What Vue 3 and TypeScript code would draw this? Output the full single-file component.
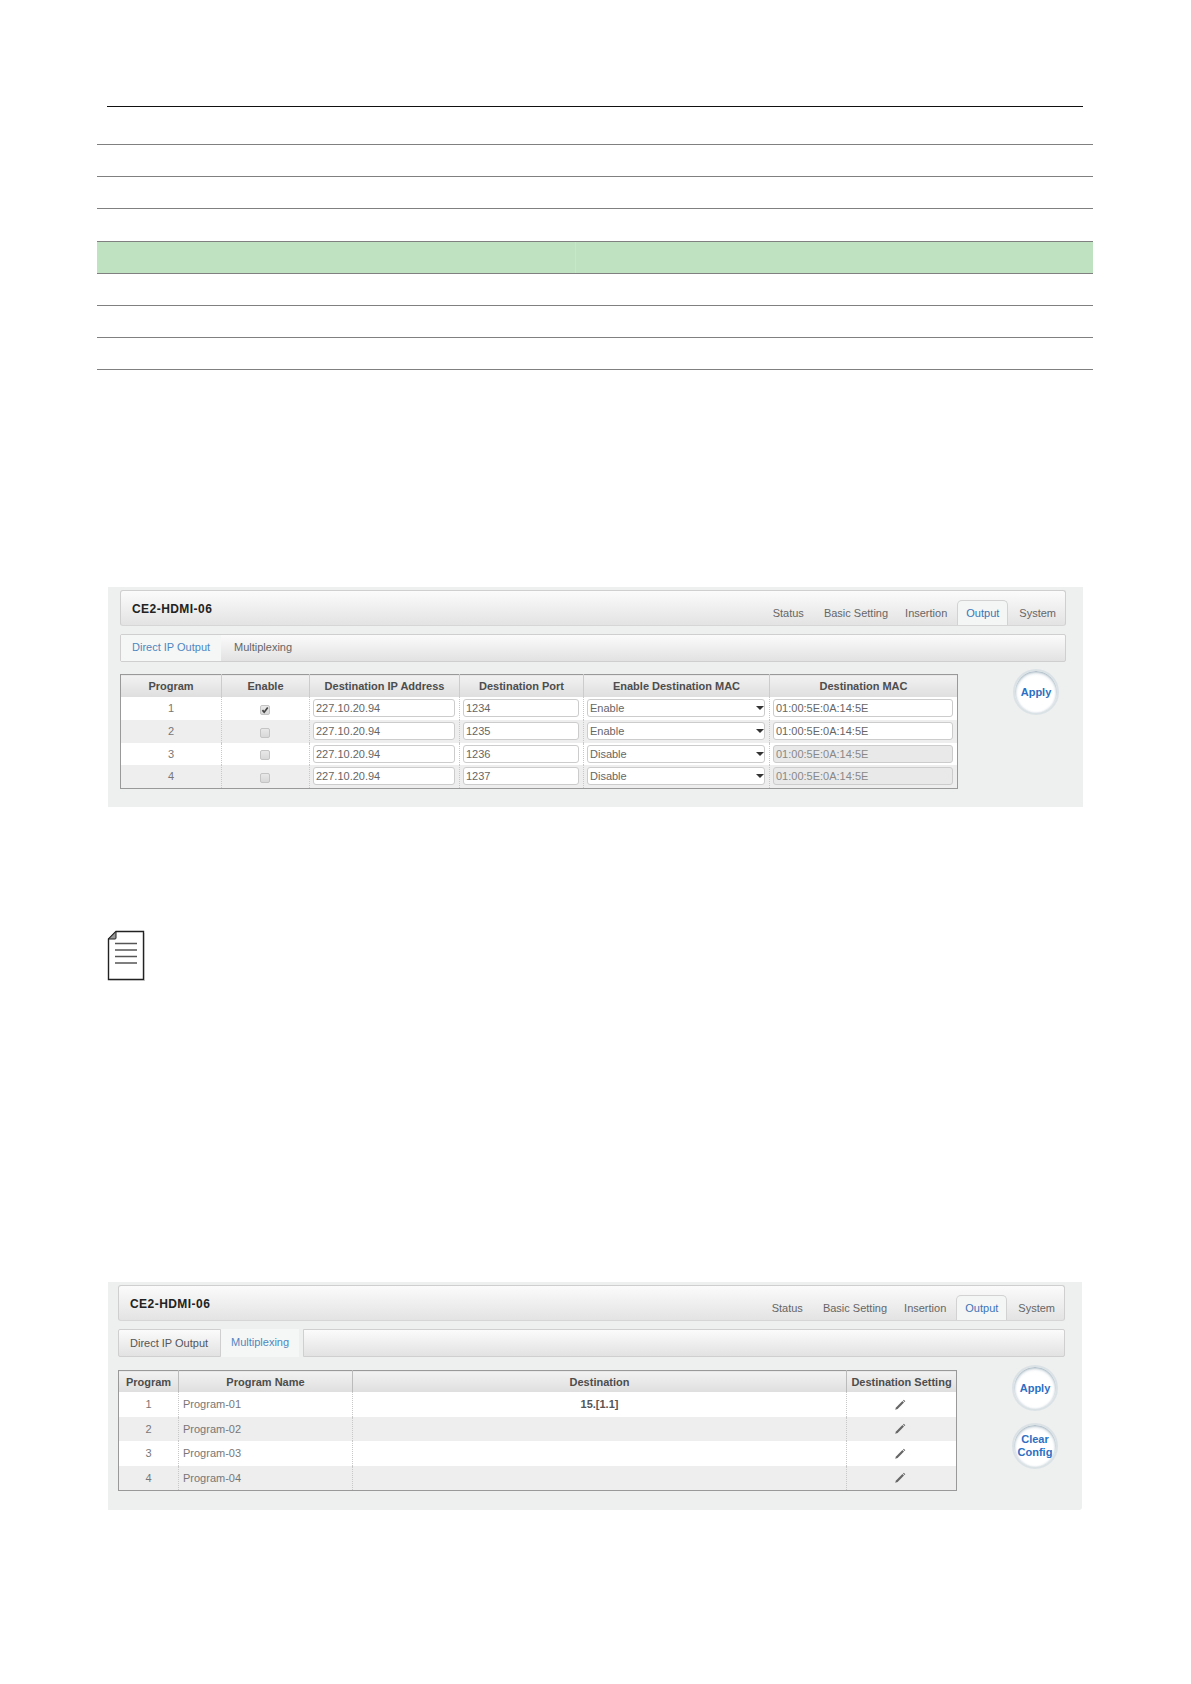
<script setup lang="ts">
const nav: string[] = ['Status', 'Basic Setting', 'Insertion', 'Output', 'System']
const directRows = [
  { id: 1, checked: true, port: '1234', mode: 'Enable', off: false },
  { id: 2, checked: false, port: '1235', mode: 'Enable', off: false },
  { id: 3, checked: false, port: '1236', mode: 'Disable', off: true },
  { id: 4, checked: false, port: '1237', mode: 'Disable', off: true }
]
const muxRows = [
  { id: 1, name: 'Program-01', dest: '15.[1.1]' },
  { id: 2, name: 'Program-02', dest: '' },
  { id: 3, name: 'Program-03', dest: '' },
  { id: 4, name: 'Program-04', dest: '' }
]
</script>

<template>
  <div class="page">
    <div class="black-rule"></div>
    <div class="rule-table">
      <div class="rule-row"></div>
      <div class="rule-row"></div>
      <div class="rule-row"></div>
    </div>
    <div class="rule-table second">
      <div class="green-row"><div class="green-cell"></div><div class="green-cell"></div></div>
      <div class="rule-row"></div>
      <div class="rule-row"></div>
      <div class="rule-row"></div>
    </div>

    <section class="panel panel-one">
      <header class="head">
        <div class="title">CE2-HDMI-06</div>
        <nav class="nav">
          <span v-for="n in nav" :key="n" class="nav-item" :class="{ active: n === 'Output' }">{{ n }}</span>
        </nav>
      </header>
      <div class="subtabs">
        <span class="sub sub-active wide-a">Direct IP Output</span>
        <span class="sub plain">Multiplexing</span>
      </div>
      <div class="body">
        <table class="grid direct">
          <colgroup>
            <col class="d1" /><col class="d2" /><col class="d3" /><col class="d4" /><col class="d5" /><col />
          </colgroup>
          <thead>
            <tr>
              <th>Program</th><th>Enable</th><th>Destination IP Address</th><th>Destination Port</th><th>Enable Destination MAC</th><th>Destination MAC</th>
            </tr>
          </thead>
          <tbody>
            <tr v-for="r in directRows" :key="r.id">
              <td class="num">{{ r.id }}</td>
              <td class="num">
                <span class="check">
                  <svg v-if="r.checked" viewBox="0 0 9 9" width="8" height="8"><path d="M1.6 4.6 L3.6 7 L7.6 1.8" fill="none" stroke="#444" stroke-width="1.9" /></svg>
                </span>
              </td>
              <td><input class="field" value="227.10.20.94" /></td>
              <td><input class="field" :value="r.port" /></td>
              <td>
                <div class="select-wrap">
                  <select class="field select"><option>{{ r.mode }}</option></select>
                </div>
              </td>
              <td><input class="field" :class="{ off: r.off }" value="01:00:5E:0A:14:5E" :disabled="r.off" /></td>
            </tr>
          </tbody>
        </table>
        <div class="actions">
          <button class="round">Apply</button>
        </div>
      </div>
    </section>

    <div class="note-icon">
      <svg viewBox="0 0 38 51" width="38" height="51">
        <path d="M9 1.5 H36.5 V49.5 H1.5 V9 Z" fill="#fff" stroke="#222" stroke-width="1.4" />
        <path d="M37.6 3 V50.6 H3" fill="none" stroke="#bbb" stroke-width="1" />
        <path d="M9 1.5 L1.5 9 H8 Q9 9 9 8 Z" fill="#999" stroke="#222" stroke-width="1" />
        <path d="M8 13.5 H30 M8 20 H30 M8 26.5 H30 M8 33 H30" stroke="#555" stroke-width="1.5" />
      </svg>
    </div>

    <section class="panel panel-two">
      <header class="head">
        <div class="title">CE2-HDMI-06</div>
        <nav class="nav">
          <span v-for="n in nav" :key="n" class="nav-item" :class="{ active: n === 'Output' }">{{ n }}</span>
        </nav>
      </header>
      <div class="subtabs">
        <span class="sub boxed wide-b">Direct IP Output</span>
        <span class="sub sub-active wide-c">Multiplexing</span>
        <span class="sub-rest"></span>
      </div>
      <div class="body body-two">
        <table class="grid mux">
          <colgroup>
            <col class="m1" /><col class="m2" /><col class="m3" /><col />
          </colgroup>
          <thead>
            <tr>
              <th>Program</th><th>Program Name</th><th>Destination</th><th>Destination Setting</th>
            </tr>
          </thead>
          <tbody>
            <tr v-for="r in muxRows" :key="r.id">
              <td class="num">{{ r.id }}</td>
              <td class="name">{{ r.name }}</td>
              <td class="dest">{{ r.dest }}</td>
              <td class="num">
                <svg class="pencil" viewBox="0 0 12 12" width="12" height="12">
                  <path d="M1.2 10.8 L2 8.4 L8.4 2 L10 3.6 L3.6 10 Z" fill="#666" />
                  <path d="M9 1.4 L9.8 .7 L11.3 2.2 L10.6 3 Z" fill="#666" />
                </svg>
              </td>
            </tr>
          </tbody>
        </table>
        <div class="actions">
          <button class="round">Apply</button>
          <button class="round">Clear<br />Config</button>
        </div>
      </div>
    </section>
  </div>
</template>

<style>
html, body { margin: 0; background: #fff; }
</style>

<style scoped>
.page {
  width: 1191px;
  height: 1684px;
  box-sizing: border-box;
  padding-top: 106px;
  background: #fff;
  font-family: "Liberation Sans", Arial, sans-serif;
  overflow: hidden;
}
.black-rule {
  height: 1px;
  margin: 0 108px 0 107px;
  width: 976px;
  background: #111;
}
.rule-table {
  margin-left: 97px;
  width: 996px;
}
.rule-row {
  height: 32px;
  box-sizing: border-box;
  border-bottom: 1px solid #808080;
}
.rule-table > .rule-row:first-child { height: 38px; }
.rule-table.second { margin-top: 32px; }
.rule-table.second > .rule-row:first-child,
.rule-table.second > .rule-row { height: 32px; }
.green-row {
  display: flex;
  height: 33px;
  box-sizing: border-box;
  border-top: 1px solid #808080;
  border-bottom: 1px solid #808080;
  background: #bfe2c1;
}
.green-cell:first-child { width: 478px; border-right: 1px solid #c9e6cb; }

.panel {
  background: #eeefef;
  box-sizing: border-box;
}
.panel-one {
  margin: 217px 0 0 108px;
  width: 975px;
  height: 220px;
  padding: 3px 17px 0 12px;
}
.panel-two {
  margin: 0 0 0 108px;
  width: 974px;
  height: 228px;
  padding: 3px 17px 0 10px;
  border-radius: 0 0 3px 0;
}
.head {
  height: 36px;
  box-sizing: border-box;
  display: flex;
  justify-content: space-between;
  align-items: flex-end;
  border: 1px solid #cfcfcf;
  border-bottom-color: #d6d6d6;
  border-radius: 3px;
  background: linear-gradient(#fbfbfb, #e3e3e3);
}
.title {
  align-self: center;
  margin: 1px 0 0 11px;
  font-size: 12px;
  font-weight: bold;
  letter-spacing: 0.45px;
  color: #222;
}
.nav {
  display: flex;
  align-items: flex-end;
  height: 24px;
}
.nav-item {
  padding: 0 10px;
  height: 23px;
  line-height: 22px;
  font-size: 11px;
  color: #666;
}
.nav-item:nth-child(3) { padding-left: 7px; }
.nav-item:last-child { padding-right: 9px; }
.nav-item.active {
  height: 24px;
  margin: 0 1px 0 0;
  padding: 0 8px;
  line-height: 25px;
  color: #3b74b5;
  background: #f4f6f6;
  border: 1px solid #d2d2d2;
  border-bottom: 0;
  border-radius: 5px 5px 0 0;
}
.subtabs {
  margin-top: 8px;
  height: 28px;
  display: flex;
  box-sizing: border-box;
}
.panel-one .subtabs {
  border: 1px solid #cfcfcf;
  background: linear-gradient(#fbfbfb, #e2e2e2);
  border-radius: 2px;
}
.sub {
  font-size: 11px;
  line-height: 25px;
  color: #666;
  box-sizing: border-box;
}
.sub-active {
  color: #4f86c0;
  background: #f5f7f7;
}
.wide-a { width: 100px; padding-left: 11px; }
.plain { padding-left: 13px; }
.wide-b {
  width: 103px;
  padding-left: 11px;
  line-height: 26px;
  border: 1px solid #cfcfcf;
  background: linear-gradient(#fbfbfb, #e2e2e2);
  color: #555;
  border-radius: 2px 0 0 2px;
}
.wide-c { width: 78px; padding-left: 10px; line-height: 27px; }
.sub-rest {
  flex: 1;
  margin-left: 4px;
  border: 1px solid #cfcfcf;
  background: linear-gradient(#fbfbfb, #e2e2e2);
  border-radius: 0 2px 2px 0;
}
.body {
  display: flex;
  margin-top: 12px;
}
.body-two { margin-top: 13px; }
.grid {
  flex: none;
  border-collapse: collapse;
  table-layout: fixed;
  border: 1px solid #999;
  font-size: 11px;
  color: #777;
}
.direct { width: 838px; }
.mux { width: 839px; }
.d1 { width: 101px; }
.d2 { width: 88px; }
.d3 { width: 150px; }
.d4 { width: 124px; }
.d5 { width: 186px; }
.m1 { width: 60px; }
.m2 { width: 174px; }
.m3 { width: 494px; }
.grid th {
  height: 22px;
  padding: 0;
  background: linear-gradient(#f2f2f2, #dedede);
  color: #4d4d4d;
  font-weight: bold;
  font-size: 11px;
  border-left: 1px solid #ddd;
}
.grid th:first-child { border-left: 0; }
.direct th { border-left-color: #ccc; }
.mux th { height: 21px; border-left-color: #bbb; }
.grid td {
  padding: 0;
  border-left: 1px dotted #c8c8c8;
  text-align: left;
}
.grid td:first-child { border-left: 0; }
.grid tbody tr:nth-child(odd) td { background: #fff; }
.grid tbody tr:nth-child(even) td { background: #eeeeee; }
.direct tbody tr { height: 22.75px; }
.mux tbody tr { height: 24.5px; }
.grid td.num { text-align: center; }
.name { padding-left: 4px !important; }
.dest {
  text-align: center !important;
  font-weight: bold;
  color: #555;
}
.check {
  display: inline-block;
  width: 8px;
  height: 8px;
  margin: 2px 2px 0 0;
  vertical-align: middle;
  border: 1px solid #c4c4c4;
  border-radius: 2px;
  background: linear-gradient(#e8e8e8, #d8d8d8);
}
.check svg { display: block; }
.field {
  display: block;
  width: calc(100% - 7px);
  height: 18px;
  margin: 0 0 0 3px;
  padding: 0 2px;
  box-sizing: border-box;
  border: 1px solid #ccc;
  border-radius: 3px;
  background: #fff;
  font: 11px "Liberation Sans", Arial, sans-serif;
  color: #666;
  outline: none;
}
.off { background: #e9e9e9; color: #888; }
.select-wrap { position: relative; }
.select {
  appearance: none;
  -webkit-appearance: none;
  padding-right: 16px;
}
.select-wrap::after {
  content: "";
  position: absolute;
  right: 5px;
  top: 7px;
  border-left: 4px solid transparent;
  border-right: 4px solid transparent;
  border-top: 4.5px solid #333;
}
.actions {
  width: 108px;
  flex: none;
  display: flex;
  flex-direction: column;
  align-items: center;
  gap: 12px;
  margin-top: -5px;
  margin-left: 24px;
}
.body-two .actions { margin-top: -5px; margin-left: 24px; }
.round {
  width: 46px;
  height: 46px;
  padding: 0;
  border-radius: 50%;
  border: 2px solid #dbe2e6;
  background: radial-gradient(circle at 50% 55%, #fff 55%, #eaf1f5 100%);
  box-shadow: inset 0 1px 3px #8fa4b2;
  font: bold 11px/13px "Liberation Sans", Arial, sans-serif;
  color: #2c6fc4;
}
.pencil { display: inline-block; vertical-align: middle; margin-right: 3px; }
.note-icon {
  margin: 123px 0 0 107px;
  height: 352px;
  line-height: 0;
}
.note-icon svg { display: block; }
</style>
